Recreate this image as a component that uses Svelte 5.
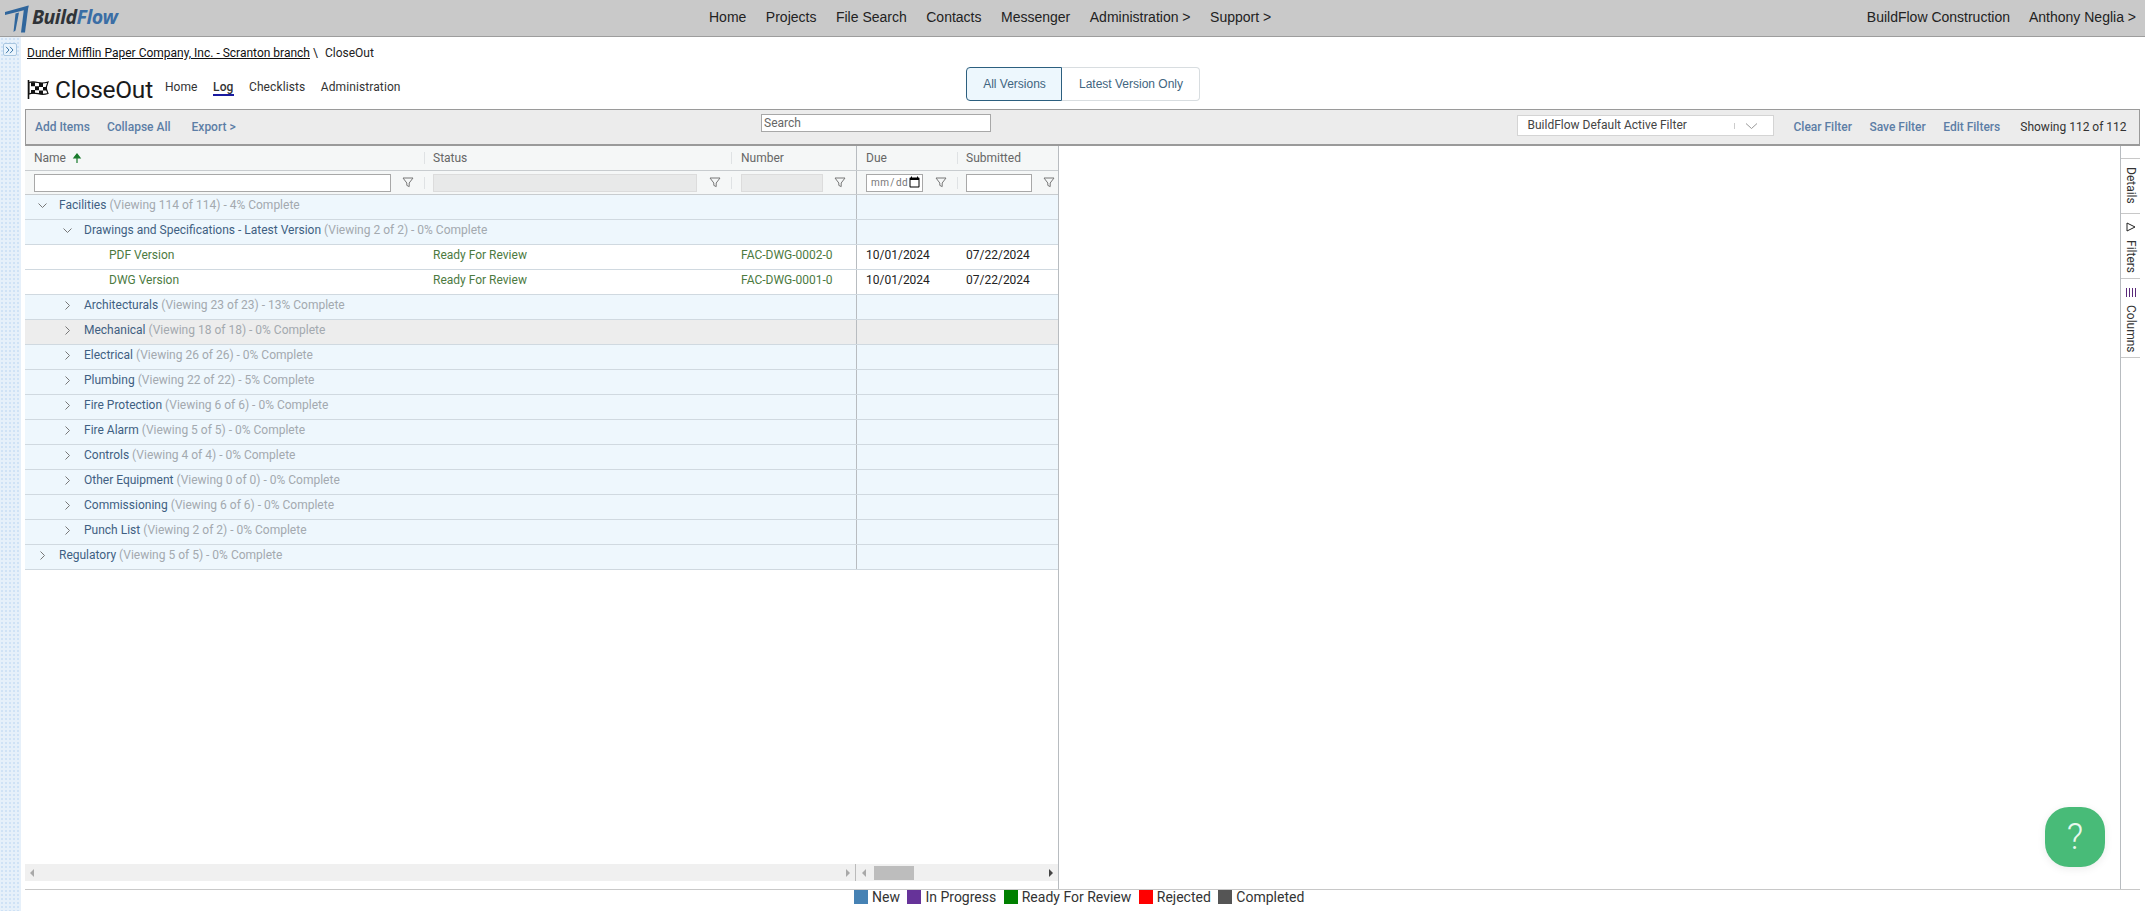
<script>
  const nav = ['Home', 'Projects', 'File Search', 'Contacts', 'Messenger', 'Administration >', 'Support >'];
  const tabs = ['Home', 'Log', 'Checklists', 'Administration'];
  const rows = [
    { level: 0, open: true, name: 'Facilities', meta: '(Viewing 114 of 114) - 4% Complete' },
    { level: 1, open: true, name: 'Drawings and Specifications - Latest Version', meta: '(Viewing 2 of 2) - 0% Complete' },
    { level: 2, name: 'PDF Version', status: 'Ready For Review', number: 'FAC-DWG-0002-0', due: '10/01/2024', submitted: '07/22/2024' },
    { level: 2, name: 'DWG Version', status: 'Ready For Review', number: 'FAC-DWG-0001-0', due: '10/01/2024', submitted: '07/22/2024' },
    { level: 1, name: 'Architecturals', meta: '(Viewing 23 of 23) - 13% Complete' },
    { level: 1, hover: true, name: 'Mechanical', meta: '(Viewing 18 of 18) - 0% Complete' },
    { level: 1, name: 'Electrical', meta: '(Viewing 26 of 26) - 0% Complete' },
    { level: 1, name: 'Plumbing', meta: '(Viewing 22 of 22) - 5% Complete' },
    { level: 1, name: 'Fire Protection', meta: '(Viewing 6 of 6) - 0% Complete' },
    { level: 1, name: 'Fire Alarm', meta: '(Viewing 5 of 5) - 0% Complete' },
    { level: 1, name: 'Controls', meta: '(Viewing 4 of 4) - 0% Complete' },
    { level: 1, name: 'Other Equipment', meta: '(Viewing 0 of 0) - 0% Complete' },
    { level: 1, name: 'Commissioning', meta: '(Viewing 6 of 6) - 0% Complete' },
    { level: 1, name: 'Punch List', meta: '(Viewing 2 of 2) - 0% Complete' },
    { level: 0, name: 'Regulatory', meta: '(Viewing 5 of 5) - 0% Complete' }
  ];
  const legend = [
    { label: 'New', color: '#4682b4' },
    { label: 'In Progress', color: '#663399' },
    { label: 'Ready For Review', color: '#008000' },
    { label: 'Rejected', color: '#ff0000' },
    { label: 'Completed', color: '#555555' }
  ];
</script>

{#snippet funnel()}
  <svg class="funnel" width="12" height="11" viewBox="0 0 12 11"><path d="M1 1h10L7.2 6v3.600L4.800 8.400V6z" fill="none" stroke="#777" stroke-width="1"/></svg>
{/snippet}

<div class="page">
  <header class="topbar">
    <div class="brand">
      <svg width="30" height="33" viewBox="3 1.500 30 33">
        <path d="M5 11.500 28.500 5l-.7 3.800L19 11 5 14.500z" fill="#30669c"/>
        <path d="M24 8l4.500-3L25 32h-4z" fill="#30669c"/>
        <path d="M15.500 13l3.500-1-3.500 18-2 1.500z" fill="#30669c"/>
      </svg>
      <span class="wordmark"><b>Build</b><i>Flow</i></span>
    </div>
    <nav class="mainnav">
      {#each nav as item}<span>{item}</span>{/each}
    </nav>
    <div class="account"><span>BuildFlow Construction</span><span>Anthony Neglia &gt;</span></div>
  </header>

  <div class="shell">
    <aside class="strip">
      <div class="expand"><svg width="10" height="8" viewBox="0 0 10 8"><path d="M1 .8 4 4 1 7.200M5 .8 8 4 5 7.200" fill="none" stroke="#3f78a8" stroke-width="1"/></svg></div>
    </aside>

    <main class="content">
      <div class="heading">
        <div class="heading-left">
          <div class="crumbs"><a href="#top">Dunder Mifflin Paper Company, Inc. - Scranton branch</a><span class="sep">\</span><span>CloseOut</span></div>
          <div class="titleline">
            <svg class="flag" width="23" height="21" viewBox="0 0 23 21">
              <path d="M1.500 1v19" stroke="#111" stroke-width="1.600"/>
              <path d="M2 3.500c3-1.200 6-.8 9 0s6 .8 10-.5l-2 6 2 5.500c-4 1.300-7 1-10 .2s-6-1-9 .3z" fill="#fff" stroke="#111" stroke-width="1.200"/>
              <path d="M4 3.200h4v4H4zM12 4h4v4h-4zM8 7.200h4v4H8zM16 8h4v3.500h-4zM4 11h4v3.500H4zM12 11.500h4v3.500h-4z" fill="#111"/>
            </svg>
            <h1>CloseOut</h1>
            <div class="subtabs">
              {#each tabs as tab}<span class:active={tab === 'Log'}>{tab}</span>{/each}
            </div>
          </div>
        </div>
        <div class="segment"><button class="on">All Versions</button><button>Latest Version Only</button></div>
      </div>

      <div class="toolbar">
        <div class="actions left"><span>Add Items</span><span>Collapse All</span><span>Export &gt;</span></div>
        <input class="search" placeholder="Search" />
        <div class="filter-select"><span>BuildFlow Default Active Filter</span><i></i><svg width="13" height="8" viewBox="0 0 13 8"><path d="M1 1.500 6.500 6.500 12 1.500" fill="none" stroke="#999" stroke-width="1"/></svg></div>
        <div class="actions right"><span>Clear Filter</span><span>Save Filter</span><span>Edit Filters</span></div>
        <div class="showing">Showing 112 of 112</div>
      </div>

      <div class="workspace">
        <section class="grid">
          <div class="line head">
            <div class="cell c-name">Name <svg width="10" height="11" viewBox="0 0 10 11"><path d="M5 10V2M2 4.800 5 1l3 3.800z" fill="#187a2b" stroke="#187a2b" stroke-width="1.200"/></svg></div>
            <div class="cell c-status">Status</div>
            <div class="cell c-number">Number</div>
            <div class="cell c-due">Due</div>
            <div class="cell c-sub">Submitted</div>
          </div>
          <div class="line filters">
            <div class="cell c-name"><input class="fi" />{@render funnel()}</div>
            <div class="cell c-status"><input class="fi" disabled />{@render funnel()}</div>
            <div class="cell c-number"><input class="fi" disabled />{@render funnel()}</div>
            <div class="cell c-due"><input class="fi date" type="date" />{@render funnel()}</div>
            <div class="cell c-sub"><input class="fi" />{@render funnel()}</div>
          </div>
          <div class="body">
            {#each rows as r}
              <div class="line row" class:item={r.level === 2} class:hover={r.hover}>
                <div class="cell c-name lv{r.level}">
                  {#if r.level < 2}
                    <svg class="chev" width="11" height="11" viewBox="0 0 11 11">
                      {#if r.open}<path d="M1.500 3.500 5.500 7.500 9.500 3.500" fill="none" stroke="#777" stroke-width="1"/>
                      {:else}<path d="M3.500 1.500 7.500 5.500 3.500 9.500" fill="none" stroke="#777" stroke-width="1"/>{/if}
                    </svg>
                  {/if}
                  <span class="nm">{r.name}</span>{#if r.meta}<span class="meta">&nbsp;{r.meta}</span>{/if}
                </div>
                <div class="cell c-status">{r.status ?? ''}</div>
                <div class="cell c-number">{r.number ?? ''}</div>
                <div class="cell c-due">{r.due ?? ''}</div>
                <div class="cell c-sub">{r.submitted ?? ''}</div>
              </div>
            {/each}
          </div>
          <div class="scrolls">
            <div class="sb sb-left"><span class="arr l dim"></span><span class="arr r dim"></span></div>
            <div class="sb sb-right"><span class="arr l dim"></span><span class="thumb"></span><span class="arr r"></span></div>
          </div>
        </section>

        <section class="detail"></section>

        <aside class="sidetabs">
          <div class="st st-details"><span>Details</span></div>
          <div class="st st-filters"><svg width="10" height="10" viewBox="0 0 10 10"><path d="M1 1l8 4-8 4z" fill="none" stroke="#222" stroke-width="1"/></svg><span>Filters</span></div>
          <div class="st st-columns"><svg width="10" height="9" viewBox="0 0 10 9"><path d="M.5 0v9M3.500 0v9M6.500 0v9M9.500 0v9" stroke="#5a2a7a" stroke-width="1"/></svg><span>Columns</span></div>
        </aside>

        <button class="help" aria-label="Help">?</button>
      </div>

      <footer class="legend">
        {#each legend as l}
          <div class="lg"><i style="background:{l.color}"></i><span>{l.label}</span></div>
        {/each}
      </footer>
    </main>
  </div>
</div>

<style>
  :global(body) { margin: 0; background: #fff; overflow: hidden; }
  .page { width: 2145px; height: 911px; display: flex; flex-direction: column; overflow: hidden; font: 12px/1.2 Roboto, sans-serif; color: #222; }

  .topbar { height: 37px; flex: none; box-sizing: border-box; background: #c9c9c9; border-bottom: 1px solid #9d9d9d; display: flex; align-items: center; font: 14px "Liberation Sans", Arial, sans-serif; color: #222; }
  .brand { width: 709px; display: flex; align-items: center; padding-left: 3px; box-sizing: border-box; height: 100%; }
  .wordmark { font: italic 700 19.500px "Open Sans", sans-serif; letter-spacing: -.5px; margin: -4px 0 0 -1px; }
  .wordmark b { color: #2f3338; font-weight: 700; }
  .wordmark i { color: #3b6ea5; font-weight: 700; }
  .mainnav { display: flex; gap: 19.500px; padding-bottom: 2px; }
  .account { margin-left: auto; display: flex; gap: 19px; padding: 0 9px 2px 0; }

  .shell { flex: 1; display: flex; min-height: 0; }
  .strip { width: 21px; flex: none; background-color: #dceaf8; background-image: radial-gradient(#cfe2f6 1px, transparent 1px), linear-gradient(#e6f0fa, #e6f0fa); background-size: 4px 4px; padding: 6px 0 0 3px; box-sizing: border-box; }
  .expand { width: 14px; height: 13px; border: 1px solid #a9c6e0; border-radius: 2px; background: #eaf4fd; box-sizing: border-box; display: flex; align-items: center; justify-content: center; }

  .content { flex: 1; min-width: 0; padding: 0 5px 0 4px; display: flex; flex-direction: column; }
  .heading { height: 72px; flex: none; display: flex; box-sizing: border-box; }
  .heading-left { width: 941px; flex: none; padding-left: 2px; box-sizing: border-box; }
  .crumbs { margin-top: 9px; height: 15px; line-height: 15px; color: #222; }
  .crumbs a { color: #111; text-decoration: underline; }
  .crumbs .sep { margin: 0 7px 0 3px; }
  .titleline { display: flex; align-items: center; margin-top: 11px; height: 34px; }
  .flag { margin-right: 5px; }
  h1 { margin: 0; font: 400 24.500px Roboto, sans-serif; color: #1a1a1a; letter-spacing: -.25px; }
  .subtabs { display: flex; gap: 15.500px; margin: -2px 0 0 12px; color: #333; letter-spacing: .1px; }
  .subtabs .active { font-weight: 500; border-bottom: 2px solid #1a1aa0; }
  .segment { display: flex; margin-top: 30px; height: 34px; }
  .segment button { font: 12px "Liberation Sans", Arial, sans-serif; color: #3f6580; background: #fff; border: 1px solid #d8dde0; border-left: 0; border-radius: 0 4px 4px 0; padding: 0 0 0 1px; width: 138px; }
  .segment button.on { width: 96px; background: #edf7fd; border: 1px solid #2c5f7f; border-radius: 4px 0 0 4px; }

  .toolbar { height: 37px; flex: none; background: #ececec; border: 2px solid #9a9a9a; border-width: 1px 1px 2px 1px; box-sizing: border-box; display: flex; align-items: center; }
  .actions span { color: #5c7ea6; font-weight: 500; }
  .actions.left { display: flex; gap: 17px; padding-left: 9px; width: 735px; box-sizing: border-box; }
  .actions.left span:nth-child(3) { margin-left: 4px; }
  .search { width: 230px; height: 18px; margin-top: -8px; box-sizing: border-box; border: 1px solid #a8a8a8; padding: 0 2px; font: 12px Roboto, sans-serif; background: #fff; }
  .search::placeholder { color: #666; }
  .filter-select { margin: -3px 0 0 525.500px; width: 257px; height: 21px; flex: none; background: #fff; border: 1px solid #d4d4d4; box-sizing: border-box; display: flex; align-items: center; padding: 0 15px 0 10px; color: #444; }
  .filter-select span { flex: 1; }
  .filter-select i { width: 1px; height: 6px; background: #ccc; margin-right: 10px; }
  .actions.right { display: flex; gap: 17.500px; margin-left: 20px; }
  .showing { margin-left: 20px; color: #333; }

  .workspace { flex: 1; display: flex; min-height: 0; position: relative; }
  .grid { width: 1034px; flex: none; border-right: 1px solid #b8bcc0; box-sizing: border-box; display: flex; flex-direction: column; }
  .line { display: grid; grid-template-columns: 399px 307px 125px 101px 101px; height: 25px; box-sizing: border-box; }
  .cell { padding-left: 9px; display: flex; align-items: center; min-width: 0; white-space: nowrap; position: relative; }
  .c-number { padding-left: 10px; }
  .c-due { border-left: 1px solid #b8bcc0; padding-left: 9px; }
  .head { background: #f5f7f7; border-bottom: 1px solid #c8cccf; color: #666; height: 25px; }
  .head .c-name svg { margin-left: 6px; }
  .head .c-status::before, .head .c-number::before, .head .c-sub::before,
  .filters .c-status::before, .filters .c-number::before, .filters .c-sub::before { content: ""; position: absolute; left: 0; top: 6px; height: 12px; width: 1px; background: #dfe2e4; }
  .filters { background: #f5f7f7; border-bottom: 1px solid #c8cccf; height: 24px; }
  .filters .cell { justify-content: space-between; padding-right: 10px; }
  .filters .c-sub { padding-right: 3px; }
  .fi { box-sizing: border-box; height: 18px; border: 1px solid #a8a8a8; background: #fff; padding: 0 2px; }
  .c-name .fi { width: 357px; }
  .c-status .fi { width: 264px; }
  .c-number .fi { width: 82px; }
  .c-due .fi { width: 57px; font: 10px Roboto, sans-serif; letter-spacing: .4px; color: #777; padding: 0 1px 0 3px; }
  .c-due .fi::-webkit-calendar-picker-indicator { width: 13px; height: 13px; margin: 0; padding: 0; filter: brightness(.4); }
  .c-sub .fi { width: 66px; }
  .fi:disabled { background: #e8e9e9; border-color: #dcdcdc; }
  .body { flex: 1; min-height: 0; }
  .row { background: #eef7fd; border-bottom: 1px solid #d0d9e0; height: 25px; }
  .row .cell { padding-bottom: 3px; }
  .row.item { background: #fff; color: #4c7a3f; }
  .row.hover { background: #ededed; }
  .row .c-due, .row .c-sub { color: #222; }
  .lv0 { padding-left: 12px; }
  .lv1 { padding-left: 37px; }
  .lv2 { padding-left: 84px; }
  .chev { margin-right: 11px; flex: none; }
  .nm { color: #3f5f82; }
  .row.item .nm { color: #4c7a3f; }
  .meta { color: #a3a9af; }

  .scrolls { display: flex; height: 17px; margin-bottom: 8px; flex: none; }
  .sb { background: #f0f0f0; display: flex; align-items: center; justify-content: space-between; padding: 0 5px; box-sizing: border-box; position: relative; }
  .sb-left { width: 831px; border-right: 1px solid #bbb; }
  .sb-right { width: 202px; padding-left: 6px; }
  .arr { width: 0; height: 0; border: 4px solid transparent; border-left-width: 0; border-right-width: 0; }
  .arr.l { border-right: 4px solid #444; }
  .arr.r { border-left: 4px solid #444; }
  .arr.dim.l { border-left-color: transparent; border-right-color: #a9a9a9; }
  .arr.dim.r { border-right-color: transparent; border-left-color: #a9a9a9; }
  .thumb { width: 40px; height: 14px; background: #bdbdbd; position: absolute; left: 18px; top: 2px; }

  .detail { flex: 1; }
  .sidetabs { width: 20px; flex: none; border-left: 1px solid #b8bcc0; padding-top: 12px; box-sizing: border-box; }
  .st { width: 100%; border-top: 1px solid #c8c8c8; display: flex; flex-direction: row; align-items: center; writing-mode: vertical-rl; font-size: 12px; color: #333; box-sizing: border-box; }
  .st-details { height: 55px; padding-top: 8px; }
  .st-filters { height: 65px; padding-top: 8px; gap: 8px; }
  .st-columns { height: 80px; border-bottom: 1px solid #c8c8c8; padding-top: 9px; gap: 8px; }
  .help { position: absolute; left: 2020px; top: 661px; width: 60px; height: 60px; border: 0; padding: 0; border-radius: 24px; background: #48bb78; color: #e8f8ee; font: 300 36px Roboto, sans-serif; box-shadow: 0 2px 8px rgba(0,0,0,.08); }

  .legend { height: 22px; flex: none; border-top: 1px solid #c8c8c8; box-sizing: border-box; display: flex; gap: 7.500px; padding-left: 829px; font-size: 14px; color: #333; }
  .lg { display: flex; gap: 4px; height: 15px; line-height: 14px; }
  .lg i { width: 14px; height: 14px; display: block; margin-top: 0; }
</style>
